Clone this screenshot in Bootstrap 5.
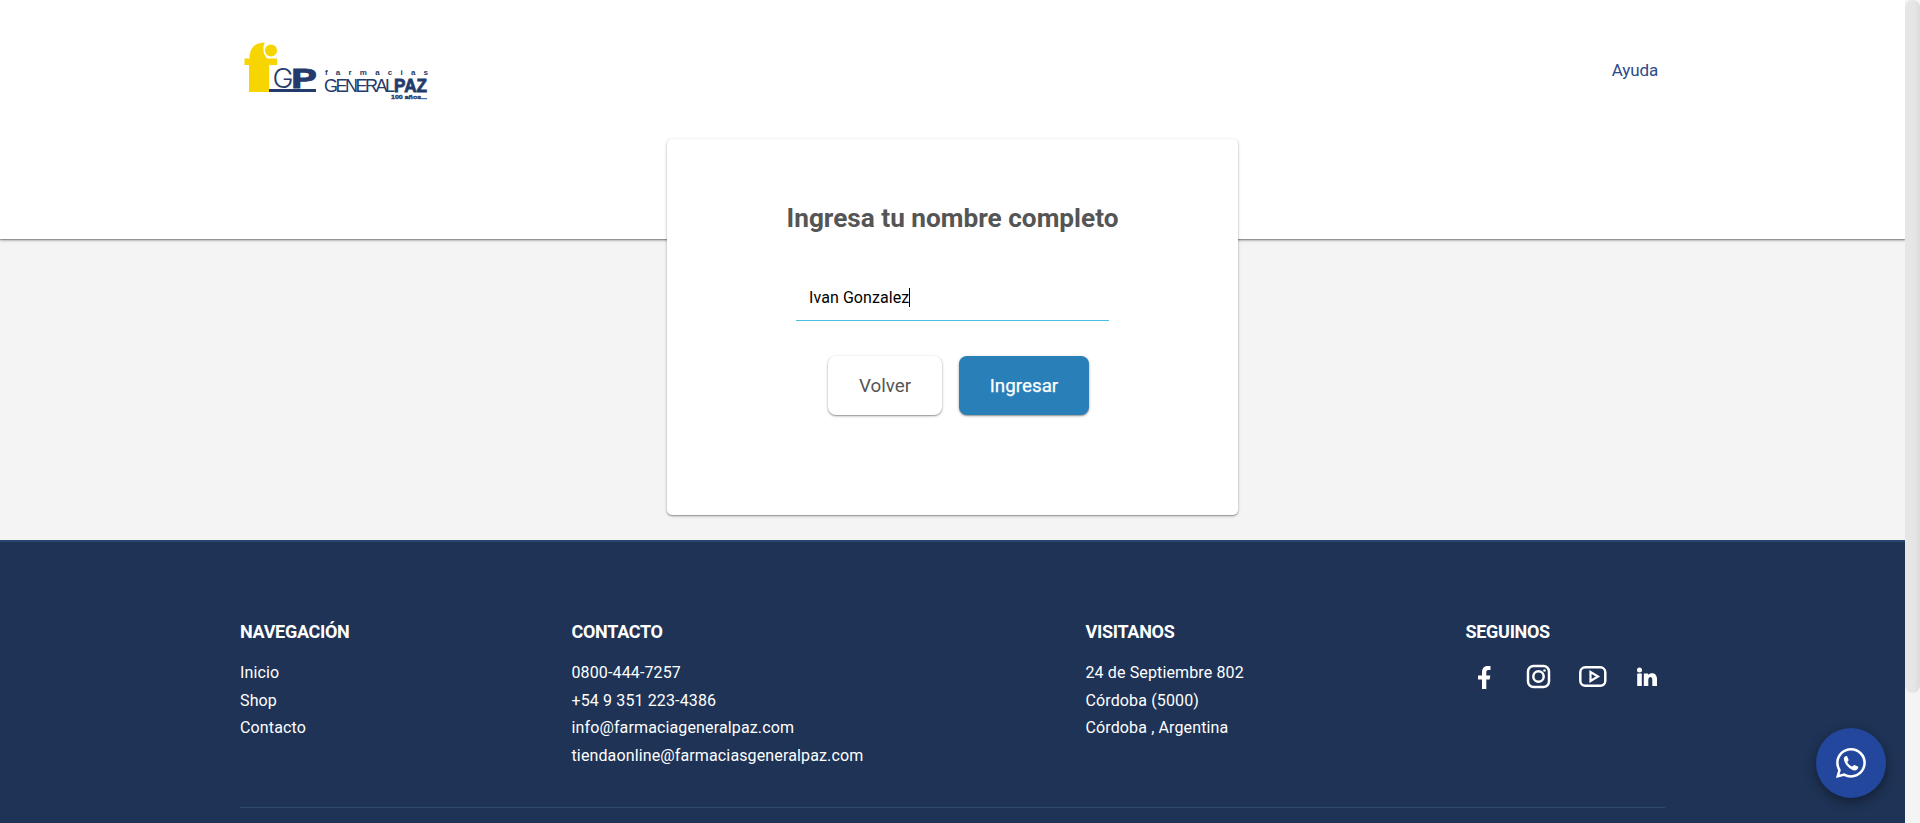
<!DOCTYPE html>
<html lang="es">
<head>
<meta charset="utf-8">
<meta name="viewport" content="width=device-width, initial-scale=1">
<title>Farmacias General Paz</title>
<link href="https://cdn.jsdelivr.net/npm/bootstrap@5.3.0/dist/css/bootstrap.min.css" rel="stylesheet">
<style>
  html, body { height: 100%; overflow: hidden; }
  body { font-family: Roboto, sans-serif; font-size: 16px; background: #f4f4f4; }
  .page-col { min-width: 0; }
  .scroll-track { width: 15px; background: #f4f4f4; }
  .scroll-thumb { height: 693px; border-radius: 8px; background: linear-gradient(90deg, #e6e6e6 60%, #dcdcdc); }
  .site-head { height: 239px; padding: 38px 240px 0; box-shadow: 0 1px 3px rgba(0,0,0,.4), 0 1px 1px rgba(0,0,0,.2); }
  .help-link { color: #2d4a8a; font-size: 17px; line-height: 24px; letter-spacing: -.15px; margin: 20px 7px 0 0; }
  .login-box { width: 571.5px; height: 376px; margin: -100px auto 25px; padding: 62px 0 0; border-radius: 5px; box-shadow: 0 1px 3px rgba(0,0,0,.3), 0 1px 1px rgba(0,0,0,.2); }
  .login-title { font-size: 26.2px; line-height: 34px; color: #555; font-weight: 700; margin: 0; }
  .name-field { width: 313px; height: 53px; margin: 33px auto 0; padding: 7px 13px 0; border-bottom: 1px solid #4cc0e0; color: #000; letter-spacing: .08px; }
  .caret { width: 1px; height: 19px; background: #000; }
  .act-row { gap: 17px; margin: 35px 0 0 12px; }
  .act { height: 59px; border-radius: 8px; border: 0; font-size: 18.8px; padding: 1px 0 0; box-shadow: 0 1px 3px rgba(0,0,0,.3), 0 1px 1px rgba(0,0,0,.2); }
  .act-back { width: 114px; background: #fff; color: #555; }
  .act-go { width: 130px; background: #2980b9; color: #fff; -webkit-text-stroke: .25px #fff; }
  .site-foot { height: 283px; background: #1e3356; border-top: 2px solid #27456f; color: #fff; padding: 78px 240px 0; overflow: hidden; }
  .foot-cols { height: 188px; border-bottom: 1px solid #304b70; display: grid; grid-template-columns: 331.5px 514px 380px 1fr; }
  .foot-title { font-size: 18px; line-height: 24px; font-weight: 700; letter-spacing: -.3px; margin: 0 0 15px; }
  .foot-list { line-height: 27.6px; letter-spacing: .13px; }
  .social { margin: 20px 0 0 11px; }
  .wa { position: fixed; right: 34px; bottom: 25px; width: 70px; height: 70px; background: #22479c; box-shadow: 0 4px 12px rgba(0,0,0,.4); }
</style>
</head>
<body>
<div class="d-flex h-100">
  <div class="page-col flex-grow-1">
    <header class="site-head bg-white d-flex justify-content-between align-items-start">
      <svg width="200" height="66" viewBox="240 38 200 66" font-family="'Liberation Sans', sans-serif" fill="#253a6c">
        <path fill="#f6d500" d="M244.500 58.500h5C249.500 48 255 42.500 265 42.500C262.500 46 262.500 54 267 58.500H277V65H269V92H249V65H244.500Z"/>
        <circle cx="271" cy="50.500" r="6" fill="#f6d500"/>
        <text x="272.500" y="87.500" font-family="Inter, sans-serif" font-weight="300" font-size="26.500" textLength="21" lengthAdjust="spacingAndGlyphs">G</text>
        <text x="291.500" y="87.500" font-size="27" font-weight="700" textLength="25" lengthAdjust="spacingAndGlyphs" stroke="#253a6c" stroke-width="1.200">P</text>
        <rect x="269" y="89" width="47" height="3"/>
        <text x="325" y="74.500" font-size="8" font-weight="700" textLength="103">farmacias</text>
        <text x="324" y="92" font-size="18" textLength="71" lengthAdjust="spacing">GENERAL</text>
        <text x="394" y="92" font-size="18" font-weight="700" textLength="33" lengthAdjust="spacingAndGlyphs" stroke="#253a6c" stroke-width=".8">PAZ</text>
        <text x="391" y="99" font-size="5.500" font-weight="700" textLength="36" lengthAdjust="spacingAndGlyphs" stroke="#253a6c" stroke-width=".35">100 años...</text>
      </svg>
      <a href="#" class="help-link text-decoration-none">Ayuda</a>
    </header>

    <main class="login-box bg-white position-relative">
      <h1 class="login-title text-center">Ingresa tu nombre completo</h1>
      <div class="name-field d-flex align-items-center"><span>Ivan Gonzalez</span><span class="caret"></span></div>
      <div class="act-row d-flex justify-content-center">
        <button type="button" class="btn act act-back">Volver</button>
        <button type="button" class="btn act act-go">Ingresar</button>
      </div>
    </main>

    <footer class="site-foot">
      <div class="foot-cols">
        <section>
          <h2 class="foot-title">NAVEGACIÓN</h2>
          <div class="foot-list"><div>Inicio</div><div>Shop</div><div>Contacto</div></div>
        </section>
        <section>
          <h2 class="foot-title">CONTACTO</h2>
          <div class="foot-list"><div>0800-444-7257</div><div>+54 9 351 223-4386</div><div>info@farmaciageneralpaz.com</div><div>tiendaonline@farmaciasgeneralpaz.com</div></div>
        </section>
        <section>
          <h2 class="foot-title">VISITANOS</h2>
          <div class="foot-list"><div>24 de Septiembre 802</div><div>Córdoba (5000)</div><div>Córdoba , Argentina</div></div>
        </section>
        <section>
          <h2 class="foot-title">SEGUINOS</h2>
          <svg class="social d-block" width="182" height="26" viewBox="1477 664 182 26" fill="none" stroke="#fff" stroke-width="2.500">
            <path fill="#fff" stroke="none" d="M1482 689V679.500H1478V675.500H1482V672.500C1482 668.500 1484 666 1487.500 666H1490.500V670H1488.500C1487 670 1486.300 670.800 1486.300 672.200V675.500H1490.300L1489.700 679.500H1486.300V689Z"/>
            <rect x="1528" y="666" width="21" height="21" rx="5.500"/><circle cx="1538.500" cy="676.500" r="5.200"/><circle cx="1544.500" cy="670.500" r="1.300" fill="#fff" stroke="none"/>
            <rect x="1580.300" y="667.300" width="25" height="18.500" rx="5"/><path stroke-width="2.200" d="M1590.500 672L1598 676.500L1590.500 681Z"/>
            <g fill="#fff" stroke="none"><circle cx="1639.500" cy="670" r="2.500"/><path d="M1637.200 673.500H1641.800V686H1637.200ZM1643.800 673.500H1648.200V675C1650.500 672 1657 672.500 1657 679V686H1652.300V680C1652.300 676 1648.300 676 1648.300 680V686H1643.800Z"/></g>
          </svg>
        </section>
      </div>
    </footer>
  </div>
  <div class="scroll-track flex-shrink-0"><div class="scroll-thumb"></div></div>
</div>
<a href="#" class="wa rounded-circle d-flex align-items-center justify-content-center" aria-label="WhatsApp">
  <svg width="30" height="30" viewBox="0 0 16 16" fill="#fff"><path d="M13.601 2.326A7.854 7.854 0 0 0 7.994 0C3.627 0 .068 3.558.064 7.926c0 1.399.366 2.760 1.057 3.965L0 16l4.204-1.102a7.933 7.933 0 0 0 3.790.965h.004c4.368 0 7.926-3.558 7.930-7.930A7.898 7.898 0 0 0 13.600 2.326zM7.994 14.521a6.573 6.573 0 0 1-3.356-.920l-.240-.144-2.494.654.666-2.433-.156-.251a6.560 6.560 0 0 1-1.007-3.505c0-3.626 2.957-6.584 6.591-6.584a6.560 6.560 0 0 1 4.660 1.931 6.557 6.557 0 0 1 1.928 4.660c-.004 3.639-2.961 6.592-6.592 6.592z"/><path d="M4.200 5.500C4.400 4.400 5.500 3.900 6 4.500L6.700 6.200C6.900 6.700 6 7.200 6 7.500C6.500 8.600 7.500 9.500 8.500 9.900C8.900 10 9.400 9 9.800 9.100L11.700 9.900C12.200 10.200 11.600 11.900 10.100 12C7.600 12 4 8.300 4.200 5.500Z"/></svg>
</a>
<script src="https://cdn.jsdelivr.net/npm/bootstrap@5.3.0/dist/js/bootstrap.bundle.min.js"></script>
</body>
</html>
